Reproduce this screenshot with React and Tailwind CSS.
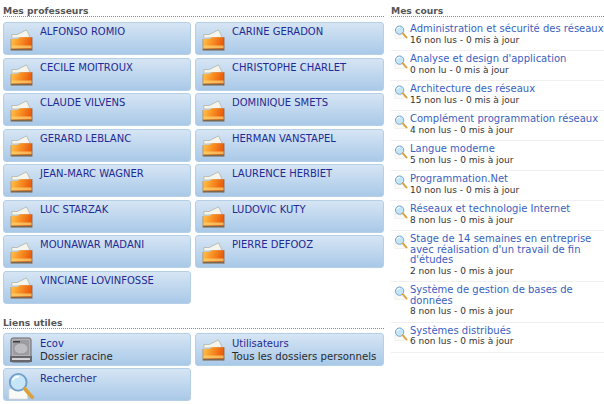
const profs = [
  "ALFONSO ROMIO",
  "CARINE GERADON",
  "CECILE MOITROUX",
  "CHRISTOPHE CHARLET",
  "CLAUDE VILVENS",
  "DOMINIQUE SMETS",
  "GERARD LEBLANC",
  "HERMAN VANSTAPEL",
  "JEAN-MARC WAGNER",
  "LAURENCE HERBIET",
  "LUC STARZAK",
  "LUDOVIC KUTY",
  "MOUNAWAR MADANI",
  "PIERRE DEFOOZ",
  "VINCIANE LOVINFOSSE",
];

const cours = [
  ["Administration et sécurité des réseaux", "16 non lus - 0 mis à jour"],
  ["Analyse et design d'application", "0 non lu - 0 mis à jour"],
  ["Architecture des réseaux", "15 non lus - 0 mis à jour"],
  ["Complément programmation réseaux", "4 non lus - 0 mis à jour"],
  ["Langue moderne", "5 non lus - 0 mis à jour"],
  ["Programmation.Net", "10 non lus - 0 mis à jour"],
  ["Réseaux et technologie Internet", "8 non lus - 0 mis à jour"],
  ["Stage de 14 semaines en entreprise avec réalisation d'un travail de fin d'études", "2 non lus - 0 mis à jour"],
  ["Système de gestion de bases de données", "8 non lus - 0 mis à jour"],
  ["Systèmes distribués", "6 non lus - 0 mis à jour"],
];

function FolderIcon() {
  return (
    <svg width="24" height="22" viewBox="0 0 26 24" className="shrink-0">
      <defs>
        <linearGradient id="fold" x1="0" y1="0" x2="1" y2="0.2">
          <stop offset="0" stopColor="#ffc850" />
          <stop offset="0.45" stopColor="#fb9426" />
          <stop offset="1" stopColor="#e85c0c" />
        </linearGradient>
      </defs>
      <path d="M3 10 V6 H9 L19 1 L23 9 Z" fill="#f5f5ee" stroke="#a8a898" strokeWidth="0.7" />
      <path d="M2 11 H9 L12 9 H25 V23 H2 Z" fill="url(#fold)" />
      <path d="M2 18 H25 V21 H2 Z" fill="#fbd070" opacity="0.75" />
      <path d="M2 21.5 H25 V23.5 H2 Z" fill="#7d6650" />
      <path d="M25 9 V23.5" stroke="#8f6a4a" strokeWidth="1" />
      <path d="M2 11 V23.5" stroke="#a8845a" strokeWidth="0.8" />
    </svg>
  );
}

function DiskIcon() {
  return (
    <svg width="24" height="26" viewBox="0 0 24 26" className="shrink-0">
      <rect x="2" y="1" width="20" height="24" rx="2" fill="#b4b4b8" stroke="#66666a" />
      <rect x="4" y="3" width="16" height="15" rx="1" fill="#9c9ca0" />
      <ellipse cx="12" cy="11.5" rx="7" ry="5.5" fill="#bdbdc1" stroke="#8a8a8e" strokeWidth="0.6" />
      <rect x="4" y="4" width="7" height="1.5" fill="#3d3d41" />
      <rect x="1" y="19" width="22" height="6" fill="#66666b" />
      <rect x="3" y="21" width="18" height="2" fill="#d4d4d7" />
    </svg>
  );
}

function SearchIcon({ size = 28 }) {
  return (
    <svg width={size} height={size} viewBox="0 0 30 30" className="shrink-0">
      <path d="M2 18 H22 V29 H2 Z" fill="#f9f9f6" stroke="#cfcfc8" strokeWidth="0.6" />
      <circle cx="12" cy="11" r="9" fill="#c6e6f8" stroke="#6f9fca" strokeWidth="2" />
      <path d="M6 9 A7 7 0 0 1 13 5" fill="none" stroke="#ffffff" strokeWidth="2" />
      <path d="M19 18 L27 27" stroke="#d9a23c" strokeWidth="4" strokeLinecap="round" />
    </svg>
  );
}

function Titre({ children }) {
  return (
    <div className="h-[12px] border-b border-dotted border-[#8a8a8a] text-[9.2px] leading-[11px] font-bold text-[#555555]">
      {children}
    </div>
  );
}

function Carte({ icon, titre, sousTitre, className }) {
  return (
    <div className="flex h-[33px] items-start gap-[6px] rounded-[3px] border border-[#b5cfe6] bg-gradient-to-b from-[#d6e5f4] to-[#a9c9e8] pl-[4px] pt-[3px]">
      <div className="flex h-[27px] w-[26px] items-center justify-center">{icon}</div>
      <div className={"min-w-0 leading-[13px] " + (className || "")}>
        <div className="text-[10px] text-[#1f2a94]">{titre}</div>
        {sousTitre && <div className="whitespace-nowrap text-[10.2px] text-[#2b2b2b]">{sousTitre}</div>}
      </div>
    </div>
  );
}

export default function App() {
  return (
    <div className="flex h-[404px] w-[604px] gap-[7px] overflow-hidden bg-white pl-[3px] pt-[5px] font-['DejaVu_Sans',sans-serif]">
      <div className="flex w-[381px] shrink-0 flex-col">
        <Titre>Mes professeurs</Titre>
        <div className="mt-[5px] grid grid-cols-[188px_189px] gap-x-[4px] gap-y-[2.5px]">
          {profs.map((nom) => (
            <Carte key={nom} icon={<FolderIcon />} titre={nom} className="-mt-px" />
          ))}
        </div>
        <div className="mt-[13px]">
          <Titre>Liens utiles</Titre>
        </div>
        <div className="mt-[4px] grid grid-cols-[188px_189px] gap-x-[4px] gap-y-[2.5px]">
          <Carte icon={<DiskIcon />} titre="Ecov" sousTitre="Dossier racine" />
          <Carte icon={<FolderIcon />} titre="Utilisateurs" sousTitre="Tous les dossiers personnels" />
          <Carte icon={<SearchIcon />} titre="Rechercher" />
        </div>
      </div>
      <div className="flex min-w-0 flex-1 flex-col">
        <Titre>Mes cours</Titre>
        <div className="mt-[4px] flex flex-col">
          {cours.map(([titre, info]) => (
            <div key={titre} className="flex gap-[2px] border-b border-[#f0f0f0] pl-[3px] pt-[3px] pb-[4px]">
              <div className="pt-[1px]">
                <SearchIcon size={14} />
              </div>
              <div className="min-w-0">
                <div className="text-[10px] leading-[10.5px] text-[#3a5fc0]">{titre}</div>
                <div className="text-[9px] leading-[11.5px] text-[#333333]">{info}</div>
              </div>
            </div>
          ))}
        </div>
      </div>
    </div>
  );
}
